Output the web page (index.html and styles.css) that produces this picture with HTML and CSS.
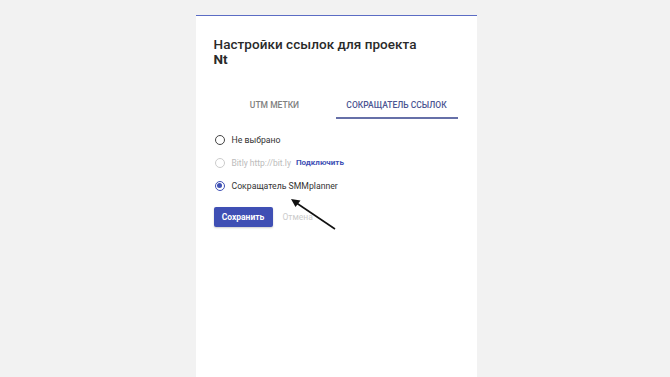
FILE: index.html
```html
<!DOCTYPE html>
<html lang="ru">
<head>
<meta charset="utf-8">
<link rel="stylesheet" href="styles.css">
</head>
<body>
<div class="page">
  <div class="card">
    <h1 class="title">Настройки ссылок для проекта<br><b>Nt</b></h1>
    <div class="tabs">
      <div class="tab">UTM метки</div>
      <div class="tab active">Сокращатель ссылок</div>
    </div>
    <div class="options">
      <label class="option"><span class="radio"></span><span class="label">Не выбрано</span></label>
      <label class="option disabled"><span class="radio"></span><span class="label">Bitly http://bit.ly</span><span class="connect">Подключить</span></label>
      <label class="option"><span class="radio checked"></span><span class="label">Сокращатель SMMplanner</span></label>
    </div>
    <div class="actions">
      <button class="btn-primary">Сохранить</button>
      <button class="btn-text">Отмена</button>
    </div>
    <svg class="arrow" width="60" height="40" viewBox="0 0 60 40">
      <line x1="48" y1="34" x2="8" y2="7" stroke="#111" stroke-width="1.6"/>
      <polygon points="4,4 13.5,5.5 8.5,12" fill="#111"/>
    </svg>
  </div>
</div>
</body>
</html>
```
FILE: styles.css
```css
html, body {
  margin: 0;
  padding: 0;
  background: #f2f2f2;
  font-family: Roboto, "Noto Sans", sans-serif;
  height: 100%;
  overflow: hidden;
}
.page {
  display: flex;
  justify-content: center;
  padding-top: 15px;
  height: 362px;
}
.card {
  position: relative;
  width: 281px;
  box-sizing: border-box;
  background: #fff;
  border-top: 1px solid #5b6cc4;
  padding: 21px 19px 0 18px;
  margin-left: 2px;
}
.title {
  margin: 0;
  font-size: 13.5px;
  line-height: 15px;
  font-weight: 500;
  color: #2a2a2a;
  letter-spacing: 0.05px;
}
.title b {
  font-weight: 700;
}
.tabs {
  display: flex;
  margin-top: 28px;
}
.tab {
  flex: 1;
  text-align: center;
  text-transform: uppercase;
  font-size: 8.5px;
  font-weight: 500;
  color: #808080;
  height: 22px;
  line-height: 20px;
  border-bottom: 2px solid transparent;
}
.tab.active {
  color: #4b5592;
  border-bottom-color: #6670a8;
}
.options {
  display: flex;
  flex-direction: column;
  gap: 12px;
  margin-top: 15px;
}
.option {
  display: flex;
  align-items: center;
  height: 11px;
  font-size: 8.7px;
  color: #333;
}
.radio {
  width: 8px;
  height: 8px;
  border: 1.5px solid #444;
  border-radius: 50%;
  margin-left: 1px;
  margin-right: 7px;
  position: relative;
}
.radio.checked {
  border-color: #3f51b5;
}
.radio.checked::after {
  content: "";
  position: absolute;
  left: 1.5px;
  top: 1.5px;
  width: 5px;
  height: 5px;
  border-radius: 50%;
  background: #3f51b5;
}
.option.disabled {
  color: #bbb;
  font-size: 8.5px;
}
.option.disabled .radio {
  border-color: #ccc;
}
.connect {
  margin-left: 5px;
  color: #3f51b5;
  font-weight: 700;
  font-size: 8px;
}
.actions {
  display: flex;
  align-items: center;
  gap: 10px;
  margin-top: 16px;
}
.btn-primary {
  width: 59px;
  height: 20px;
  border: none;
  border-radius: 2px;
  background: #3f4fb4;
  color: #fff;
  font-family: inherit;
  font-size: 8.5px;
  font-weight: 700;
  padding: 0;
  box-shadow: 0 1px 2px rgba(0,0,0,0.2);
}
.btn-text {
  border: none;
  background: none;
  padding: 0;
  font-family: inherit;
  font-size: 8.5px;
  color: #ccc;
}
.arrow {
  position: absolute;
  left: 91px;
  top: 179px;
}
```
